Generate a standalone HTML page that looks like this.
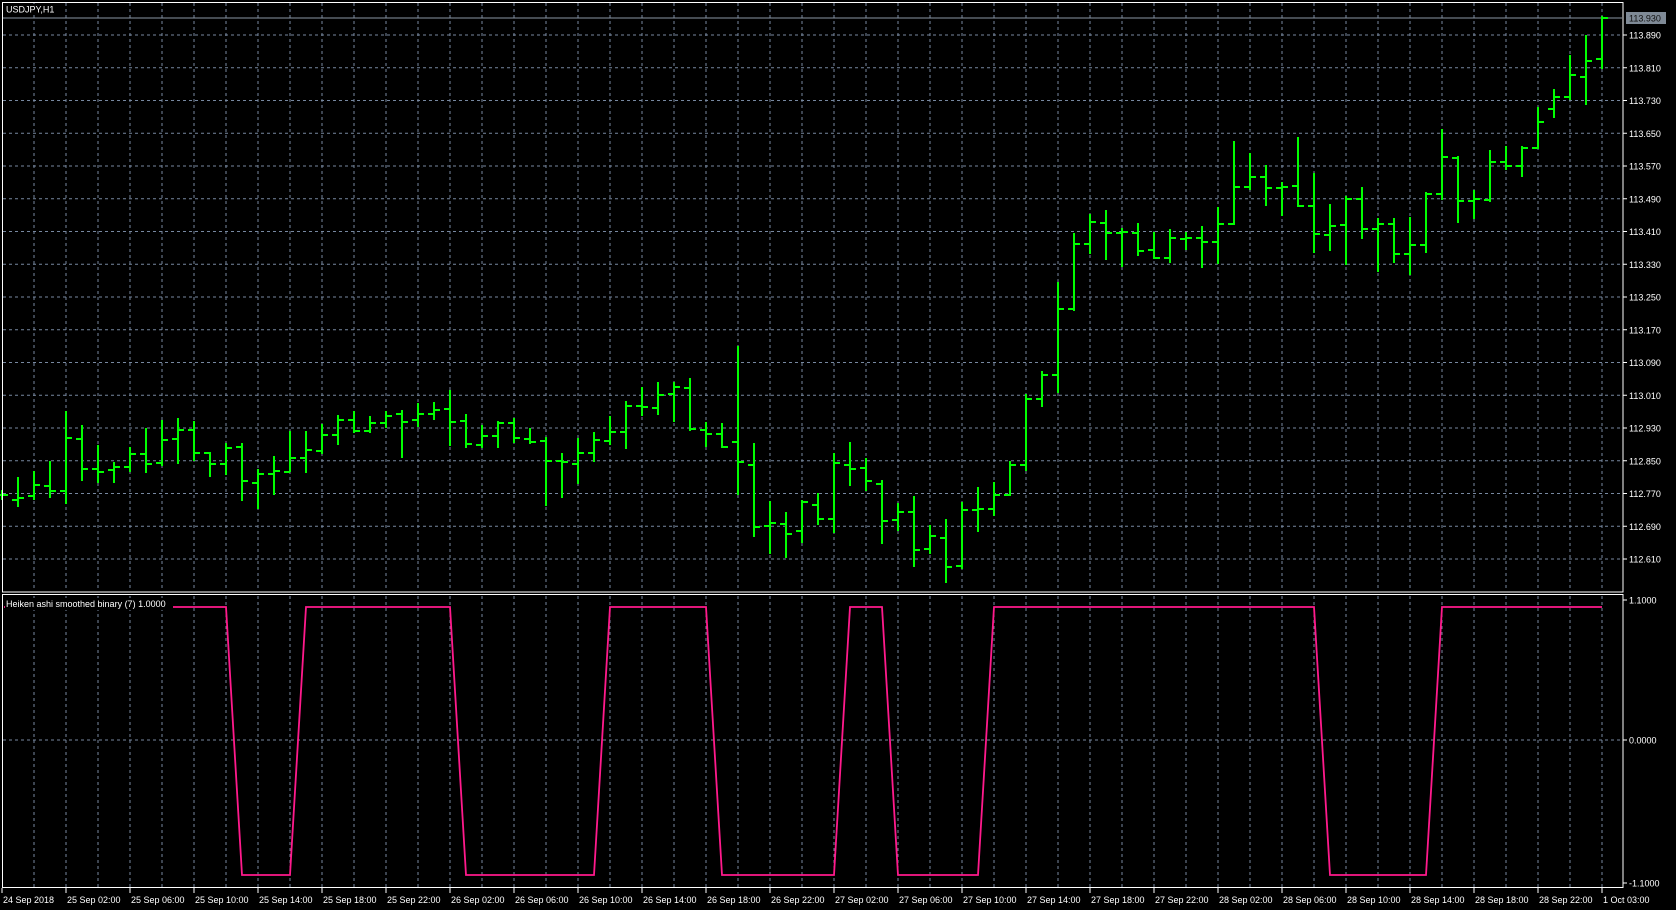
<!DOCTYPE html>
<html><head><meta charset="utf-8">
<style>
html,body{margin:0;padding:0;background:#000;}
svg{display:block;}
text{font-family:"Liberation Sans",sans-serif;font-size:9px;fill:#fff;}
</style></head>
<body>
<svg id="s" width="1676" height="910" xmlns="http://www.w3.org/2000/svg"></svg>
<script>
var s=document.getElementById('s');var h='';
h+='<rect width="1676" height="910" fill="#000"/>';
for(var x=34;x<1623;x+=32){
 h+='<line x1="'+x+'" y1="3" x2="'+x+'" y2="591" stroke="#7788a0" stroke-dasharray="3,3"/>';
 h+='<line x1="'+x+'" y1="596" x2="'+x+'" y2="887" stroke="#7788a0" stroke-dasharray="3,3"/>';
}
for(var k=0;k<17;k++){var y=35+32.75*k;var p=(113.890-0.08*k).toFixed(3);
 h+='<line x1="3" y1="'+y+'" x2="1622" y2="'+y+'" stroke="#7788a0" stroke-dasharray="3,3"/>';
 h+='<line x1="1623" y1="'+y+'" x2="1627" y2="'+y+'" stroke="#fff"/>';
 h+='<text x="1629" y="'+(y+3.5)+'">'+p+'</text>';}
h+='<line x1="3" y1="740" x2="1622" y2="740" stroke="#7788a0" stroke-dasharray="3,3"/>';
h+='<line x1="3" y1="18" x2="1622" y2="18" stroke="#8a96a3"/>';
var B=[[490,500,495,495],[477,507,500,498],[471,500,496,485],[461,498,486,491],[411,504,491,438],[425,481,439,469],[445,483,469,472],[462,483,470,467],[447,472,467,454],[428,473,454,464],
[420,466,463,440],[418,464,439,430],[421,461,430,453],[452,477,453,464],[443,475,464,448],[443,501,447,481],[469,509,483,474],[456,495,474,471],[431,472,472,458],[431,473,458,450],
[424,454,451,435],[415,445,435,420],[411,433,420,431],[416,433,431,423],[411,428,423,416],[410,458,414,422],[403,427,420,414],[402,420,414,410],[390,446,409,422],[414,448,421,444],
[425,448,445,436],[421,448,436,423],[418,443,423,438],[428,444,439,442],[437,506,441,461],[453,498,461,462],[438,484,464,453],[432,462,453,440],[416,445,441,432],[401,449,432,406],
[387,416,406,407],[382,415,408,395],[382,422,394,387],[378,431,388,429],[422,447,430,434],[423,448,434,447],[346,495,442,462],[443,537,465,527],[501,554,526,523],[512,558,524,534],
[500,543,531,502],[493,525,505,519],[453,533,519,463],[442,486,465,469],[458,491,468,481],[480,544,484,521],[503,531,520,512],[496,567,512,550],[525,554,549,536],[519,583,538,567],
[502,569,566,510],[487,532,510,509],[482,516,509,495],[461,496,495,465],[394,471,465,399],[371,407,399,375],[282,393,375,309],[233,311,309,244],[214,254,244,222],[210,260,223,233],
[228,267,233,232],[223,256,233,251],[232,259,250,258],[229,263,258,238],[232,250,239,238],[226,268,238,242],[207,264,242,224],[141,225,224,187],[153,190,187,177],[165,206,177,188],
[182,216,188,187],[137,207,186,206],[173,253,206,234],[204,251,235,226],[196,265,225,199],[187,239,199,229],[218,272,229,224],[218,263,224,254],[217,275,254,245],[192,253,245,194],
[129,200,194,157],[156,223,158,201],[190,219,201,199],[150,202,200,162],[146,170,162,166],[146,177,166,148],[107,149,148,122],[89,118,109,97],[55,100,97,75],[35,105,77,61],[16,69,59,18]];
var g='';
for(var i=0;i<B.length;i++){var x=2+16*i,b=B[i];
 g+='M'+x+' '+b[0]+'V'+b[1]+'M'+(x-6)+' '+b[2]+'H'+x+'M'+x+' '+b[3]+'H'+(x+6);}
h+='<path d="'+g+'" stroke="#00ff00" stroke-width="2" fill="none" shape-rendering="crispEdges"/>';
h+='<rect x="1626" y="12" width="40" height="12" fill="#7f8a96"/>';
h+='<text x="1629" y="21.5" style="fill:#101010">113.930</text>';
var H=607,L=875;
var pts=[[4,H],[226,H],[242,L],[290,L],[306,H],[450,H],[466,L],[594,L],[610,H],[706,H],[722,L],[834,L],[850,H],[882,H],[898,L],[978,L],[994,H],[1314,H],[1330,L],[1426,L],[1442,H],[1602,H]];
h+='<polyline points="'+pts.map(function(p){return p.join(',')}).join(' ')+'" fill="none" stroke="#ff1a8c" stroke-width="1.8"/>';
h+='<rect x="5" y="598" width="168" height="12" fill="#000"/>';
h+='<text x="6" y="607">Heiken ashi smoothed binary (7) 1.0000</text>';
h+='<rect x="2.5" y="2.5" width="1620.5" height="589.5" fill="none" stroke="#fff"/>';
h+='<rect x="2.5" y="594.5" width="1620.5" height="293" fill="none" stroke="#fff"/>';
[[600,'1.1000'],[740,'0.0000'],[883,'-1.1000']].forEach(function(a){
 h+='<line x1="1623" y1="'+a[0]+'" x2="1627" y2="'+a[0]+'" stroke="#fff"/>';
 h+='<text x="1629" y="'+(a[0]+3.5)+'">'+a[1]+'</text>';});
h+='<rect x="4" y="4" width="56" height="11" fill="#000"/>';
h+='<text x="6" y="12.5">USDJPY,H1</text>';
var T=['24 Sep 2018'];['25','26','27','28'].forEach(function(d){['02','06','10','14','18','22'].forEach(function(t){T.push(d+' Sep '+t+':00');});});
T.push('1 Oct 03:00');
for(var k=0;k<T.length;k++){var x=2+64*k;
 h+='<line x1="'+x+'" y1="888" x2="'+x+'" y2="893" stroke="#fff"/>';
 h+='<text x="'+(x+1)+'" y="903">'+T[k]+'</text>';}
s.innerHTML=h;
</script>
</body></html>
